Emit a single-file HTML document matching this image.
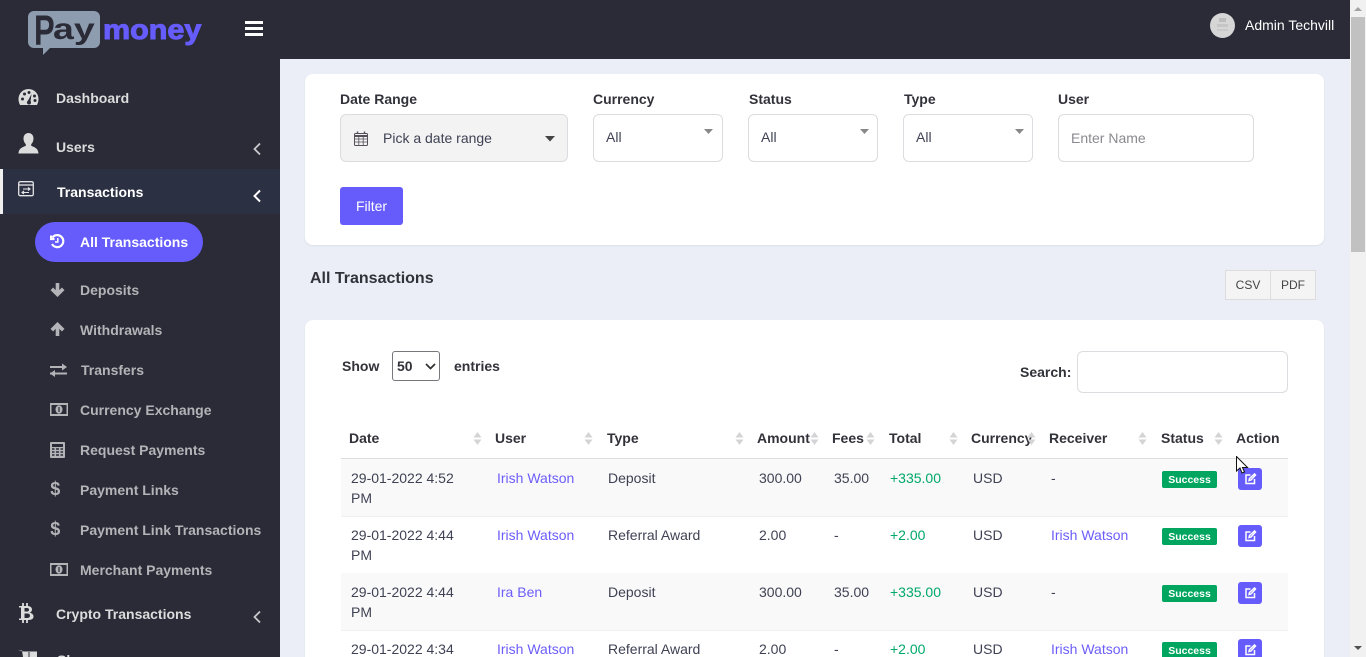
<!DOCTYPE html>
<html><head><meta charset="utf-8"><style>
html,body{margin:0;padding:0;width:1366px;height:657px;overflow:hidden;background:#ebeef6;font-family:"Liberation Sans",sans-serif;font-size:14px;color:#3f4254}
#wrap{position:absolute;left:0;top:0;width:1366px;height:657px;overflow:hidden;background:#ebeef6}
.t{position:absolute;white-space:nowrap;line-height:20px}
.b{font-weight:700}
svg{position:absolute;display:block}
#side{position:absolute;left:0;top:0;width:280px;height:657px;background:#2a2b36;overflow:hidden}
#top{position:absolute;left:280px;top:0;width:1070px;height:59px;background:#2a2b36}
.card{position:absolute;background:#fff;border-radius:8px;box-shadow:0 1px 2px rgba(0,0,0,.06)}
.m{color:#dcdcdc;font-weight:700}
.s{color:#b4b4b8;font-weight:700}
.box{position:absolute;box-sizing:border-box;border:1px solid #dcdce0;border-radius:6px;background:#fff}
.h{font-weight:700;color:#32323a}
.a{color:#6c5efa}
.g{color:#00a86b}
.badge{position:absolute;left:1162px;width:55px;height:17px;background:#00a65f;border-radius:2px;color:#fff;font-weight:700;font-size:10.5px;line-height:18px;text-align:center}
.btn{position:absolute;left:1238px;width:24px;height:22px;background:#665cfc;border-radius:3px}
.row{position:absolute;left:341px;width:947px}
.d{font-size:19px;font-weight:700;line-height:20px;transform:scaleX(.95)}
</style></head><body><div id="wrap">
<div id="side">
<svg style="left:27px;top:10px" width="75" height="46" viewBox="0 0 75 46"><path d="M7 1H67a6 6 0 0 1 6 6V32a6 6 0 0 1-6 6H23L16 45V38H7a6 6 0 0 1-6-6V7a6 6 0 0 1 6-6Z" fill="#8e9cb0"/></svg>
<div style="position:absolute;left:34px;top:9px;font:700 43px/44px 'Liberation Sans',sans-serif;color:#2a2b36;transform:scaleX(.72);transform-origin:left">P</div>
<div style="position:absolute;left:53px;top:13px;font:700 30px/34px 'Liberation Sans',sans-serif;color:#2a2b36;transform:scaleX(1.25);transform-origin:left">ay</div>
<div style="position:absolute;left:103px;top:13px;font:700 28px/34px 'Liberation Sans',sans-serif;color:#665cfc;-webkit-text-stroke:1px #665cfc;transform:scaleX(1.09);transform-origin:left">money</div>
<svg style="left:245px;top:21px" width="18" height="16"><path d="M0 1.500H18M0 7.500H18M0 13.500H18" stroke="#fff" stroke-width="3"/></svg>

<svg style="left:18px;top:88px" width="21" height="18" viewBox="0 0 21 18"><path d="M10.500 1A10 10 0 0 0 .5 11c0 2 .5 4 1.500 6h17c1-2 1.500-4 1.500-6a10 10 0 0 0-10-10Z" fill="#dcdcdc"/><g fill="#2a2b36"><circle cx="4.500" cy="11" r="1.500"/><circle cx="6.500" cy="6" r="1.500"/><circle cx="11" cy="4.500" r="1.500"/><circle cx="16.500" cy="8" r="1.500"/><circle cx="17" cy="12.500" r="1.500"/><path d="M13.500 6 12.500 13.500 9.500 13.500Z"/><circle cx="11" cy="14.500" r="2"/></g></svg>
<div class="t m" style="left:56px;top:88px">Dashboard</div>

<svg style="left:18px;top:133px" width="21" height="21" viewBox="0 0 21 21"><path d="M10.500 0c3.200 0 5 2.500 5 5.500 0 2.500-1 4.500-2.300 5.700v1.500c2.500 1.300 7 2 7.300 7.800H.5c.3-5.800 4.800-6.500 7.300-7.800v-1.500C6.500 10 5.500 8 5.500 5.500c0-3 1.800-5.500 5-5.500Z" fill="#dcdcdc"/></svg>
<div class="t m" style="left:56px;top:137px">Users</div>
<svg style="left:252px;top:142px" width="10" height="14"><path d="M8 1.500 2.500 7 8 12.500" fill="none" stroke="#c9c9cc" stroke-width="1.800"/></svg>

<div style="position:absolute;left:0;top:169px;width:280px;height:45px;background:#2b3043"></div>
<div style="position:absolute;left:0;top:169px;width:3px;height:45px;background:#f0f0f0"></div>
<svg style="left:18px;top:181px" width="17" height="16" viewBox="0 0 17 16"><rect x=".7" y=".7" width="14.600" height="14" rx="1.500" fill="none" stroke="#e4e4e4" stroke-width="1.300"/><path d="M1 4H15" stroke="#e4e4e4" stroke-width="1.300"/><path d="M5 8H12M10 6.500 12 8 10 9.500M11 11.500H4M6 10 4 11.500 6 13" fill="none" stroke="#e4e4e4" stroke-width="1.100"/></svg>
<div class="t b" style="left:57px;top:182px;color:#fff">Transactions</div>
<svg style="left:252px;top:189px" width="10" height="14"><path d="M8 1.500 2.500 7 8 12.500" fill="none" stroke="#fff" stroke-width="2"/></svg>

<div style="position:absolute;left:35px;top:222px;width:168px;height:40px;border-radius:20px;background:#665cfc"></div>
<svg style="left:50px;top:234px" width="15" height="15" viewBox="0 0 15 15"><path d="M2.500 3.500A6 6 0 1 1 2 10M1 1.500V5H4.500" fill="none" stroke="#fff" stroke-width="2.200"/><path d="M7.800 4V8H5" fill="none" stroke="#fff" stroke-width="1.500"/></svg>
<div class="t b" style="left:80px;top:232px;color:#fff">All Transactions</div>

<svg style="left:50px;top:282px" width="15" height="15" viewBox="0 0 15 15"><path d="M7.500 1V12M1.800 6.800 7.500 12.500 13.200 6.800" fill="none" stroke="#b4b4b8" stroke-width="3.600"/></svg>
<div class="t s" style="left:80px;top:280px">Deposits</div>
<svg style="left:50px;top:322px" width="15" height="15" viewBox="0 0 15 15"><path d="M7.500 14V3M1.800 8.200 7.500 2.500 13.200 8.200" fill="none" stroke="#b4b4b8" stroke-width="3.600"/></svg>
<div class="t s" style="left:80px;top:320px">Withdrawals</div>
<svg style="left:50px;top:363px" width="17" height="14" viewBox="0 0 17 14"><path d="M0 4H13M0 10.500H17" stroke="#b4b4b8" stroke-width="2"/><path d="M12 .5 17 4 12 7.500ZM5 7 0 10.500 5 14Z" fill="#b4b4b8"/></svg>
<div class="t s" style="left:81px;top:360px">Transfers</div>
<svg style="left:50px;top:403px" width="18" height="13" viewBox="0 0 18 13"><rect width="18" height="13" fill="#b4b4b8"/><rect x="1.500" y="2" width="15" height="9" fill="#2a2b36"/><ellipse cx="9" cy="6.500" rx="3.500" ry="4.200" fill="#b4b4b8"/><path d="M9 4V9" stroke="#2a2b36" stroke-width="1.200"/></svg>
<div class="t s" style="left:80px;top:400px">Currency Exchange</div>
<svg style="left:50px;top:442px" width="15" height="16" viewBox="0 0 15 16"><rect width="15" height="16" rx="1" fill="#b4b4b8"/><path d="M2 2H13V5H2Z" fill="#2a2b36"/><path d="M2 7H4.500M6 7H9M10.500 7H13M2 10H4.500M6 10H9M10.500 10H13M2 13H4.500M6 13H9M10.500 13H13" stroke="#2a2b36" stroke-width="1.500"/></svg>
<div class="t s" style="left:80px;top:440px">Request Payments</div>
<div class="t s d" style="left:50px;top:480px">$</div>
<div class="t s" style="left:80px;top:480px">Payment Links</div>
<div class="t s d" style="left:50px;top:520px">$</div>
<div class="t s" style="left:80px;top:520px">Payment Link Transactions</div>
<svg style="left:50px;top:563px" width="18" height="13" viewBox="0 0 18 13"><rect width="18" height="13" fill="#b4b4b8"/><rect x="1.500" y="2" width="15" height="9" fill="#2a2b36"/><ellipse cx="9" cy="6.500" rx="3.500" ry="4.200" fill="#b4b4b8"/><path d="M9 4V9" stroke="#2a2b36" stroke-width="1.200"/></svg>
<div class="t s" style="left:80px;top:560px">Merchant Payments</div>

<svg style="left:18px;top:603px" width="16" height="20" viewBox="0 0 16 20"><path d="M5 0V3M9 0V3M5 17V20M9 0V3M9 17V20" stroke="#dcdcdc" stroke-width="1.800"/><path d="M1 3H9.500C13 3 14 5 14 6.500S13 9.300 11.500 9.700C14 10 15.500 11.500 15.500 13.500 15.500 15.500 14 17 10.500 17H1V15.500H3V4.500H1Z" fill="#dcdcdc"/><path d="M6.500 5V8.500H9C10.500 8.500 11 7.800 11 6.800S10.500 5 9 5ZM6.500 10.500V15H9.500C11.200 15 12 14 12 12.800S11.200 10.500 9.500 10.500Z" fill="#2a2b36"/></svg>
<div class="t m" style="left:56px;top:604px">Crypto Transactions</div>
<svg style="left:252px;top:610px" width="10" height="14"><path d="M8 1.500 2.500 7 8 12.500" fill="none" stroke="#c9c9cc" stroke-width="1.800"/></svg>
<svg style="left:18px;top:650px" width="20" height="8"><path d="M0 .5H4L5 7H19V1.500H6" fill="#dcdcdc"/><path d="M11 2V7" stroke="#2a2b36"/></svg>
<div class="t m" style="left:57px;top:650px">Shop</div>
</div>

<div id="top"></div>
<svg style="left:1210px;top:13px" width="25" height="25"><circle cx="12.500" cy="12.500" r="12.500" fill="#d6d6d6"/><rect x="9" y="5" width="7" height="4" fill="#bdbdbd"/><rect x="7" y="11" width="11" height="3" fill="#c6c6c6"/><rect x="7" y="16" width="11" height="2" fill="#cacaca"/></svg>
<div class="t" style="left:1245px;top:15px;color:#fff">Admin Techvill</div>

<div style="position:absolute;left:1350px;top:0;width:16px;height:657px;background:#f1f1f1"></div>
<div style="position:absolute;left:1351px;top:17px;width:14px;height:235px;background:#c1c1c1"></div>
<svg style="left:1354px;top:6px" width="9" height="6"><path d="M0 5H8L4 1Z" fill="#a3a3a3"/></svg>
<svg style="left:1354px;top:645px" width="9" height="6"><path d="M0 1H8L4 5Z" fill="#505050"/></svg>

<div class="card" style="left:305px;top:74px;width:1019px;height:171px"></div>
<div class="t h" style="left:340px;top:89px">Date Range</div>
<div class="t h" style="left:593px;top:89px">Currency</div>
<div class="t h" style="left:749px;top:89px">Status</div>
<div class="t h" style="left:904px;top:89px">Type</div>
<div class="t h" style="left:1058px;top:89px">User</div>

<div class="box" style="left:340px;top:114px;width:228px;height:48px;background:#f3f3f3"></div>
<svg style="left:354px;top:131px" width="14" height="15" viewBox="0 0 14 15"><rect x=".5" y="2.500" width="13" height="12" rx="1" fill="none" stroke="#55505a"/><path d="M1 5H13" stroke="#55505a" stroke-width="2"/><path d="M4.800 5V14M9.200 5V14M1 8H13M1 11H13" stroke="#55505a" stroke-width=".8"/><path d="M3.500 .5V3M10.500 .5V3" stroke="#55505a" stroke-width="1.500"/></svg>
<div class="t" style="left:383px;top:128px">Pick a date range</div>
<svg style="left:545px;top:136px" width="10" height="6"><path d="M0 0H10L5 5.500Z" fill="#444"/></svg>

<div class="box" style="left:593px;top:114px;width:130px;height:48px"></div>
<div class="t" style="left:606px;top:127px">All</div>
<svg style="left:704px;top:129px" width="10" height="6"><path d="M0 0H9L4.500 5Z" fill="#888"/></svg>
<div class="box" style="left:748px;top:114px;width:130px;height:48px"></div>
<div class="t" style="left:761px;top:127px">All</div>
<svg style="left:860px;top:129px" width="10" height="6"><path d="M0 0H9L4.500 5Z" fill="#888"/></svg>
<div class="box" style="left:903px;top:114px;width:130px;height:48px"></div>
<div class="t" style="left:916px;top:127px">All</div>
<svg style="left:1015px;top:129px" width="10" height="6"><path d="M0 0H9L4.500 5Z" fill="#888"/></svg>
<div class="box" style="left:1058px;top:114px;width:196px;height:48px"></div>
<div class="t" style="left:1071px;top:128px;color:#8a8a90">Enter Name</div>

<div style="position:absolute;left:340px;top:187px;width:63px;height:38px;background:#665cfc;border-radius:3px;color:#fff;text-align:center;line-height:38px">Filter</div>

<div class="t b" style="left:310px;top:268px;font-size:16px;line-height:21px;color:#32323a">All Transactions</div>
<div style="position:absolute;left:1225px;top:270px;width:46px;height:30px;box-sizing:border-box;border:1px solid #dcdcdc;background:#f4f4f4;font-size:12px;line-height:28px;text-align:center;color:#444">CSV</div>
<div style="position:absolute;left:1270px;top:270px;width:46px;height:30px;box-sizing:border-box;border:1px solid #dcdcdc;background:#f4f4f4;font-size:12px;line-height:28px;text-align:center;color:#444">PDF</div>

<div class="card" style="left:305px;top:320px;width:1019px;height:360px"></div>
<div class="t h" style="left:342px;top:356px">Show</div>
<div style="position:absolute;left:392px;top:351px;width:48px;height:30px;box-sizing:border-box;border:1px solid #77777c;border-radius:3px;background:#fff;color:#32323a;font-weight:700;line-height:28px;padding-left:4px">50</div>
<svg style="left:425px;top:363px" width="11" height="7"><path d="M1 1 5.500 5.500 10 1" fill="none" stroke="#333" stroke-width="1.800"/></svg>
<div class="t h" style="left:454px;top:356px">entries</div>
<div class="t h" style="left:1020px;top:362px">Search:</div>
<div class="box" style="left:1077px;top:351px;width:211px;height:42px"></div>

<div class="t h" style="left:349px;top:428px">Date</div>
<div class="t h" style="left:495px;top:428px">User</div>
<div class="t h" style="left:607px;top:428px">Type</div>
<div class="t h" style="left:757px;top:428px">Amount</div>
<div class="t h" style="left:832px;top:428px">Fees</div>
<div class="t h" style="left:889px;top:428px">Total</div>
<div class="t h" style="left:971px;top:428px">Currency</div>
<div class="t h" style="left:1049px;top:428px">Receiver</div>
<div class="t h" style="left:1161px;top:428px">Status</div>
<div class="t h" style="left:1236px;top:428px">Action</div>
<svg style="left:0;top:431px" width="1366" height="15" fill="#d4d4d6"><path d="M473.500 6.500 477.500 1 481.500 6.500ZM473.500 8.500 477.500 14 481.500 8.500Z"/><path d="M584.500 6.500 588.500 1 592.500 6.500ZM584.500 8.500 588.500 14 592.500 8.500Z"/><path d="M735.500 6.500 739.500 1 743.500 6.500ZM735.500 8.500 739.500 14 743.500 8.500Z"/><path d="M810.500 6.500 814.500 1 818.500 6.500ZM810.500 8.500 814.500 14 818.500 8.500Z"/><path d="M866.500 6.500 870.500 1 874.500 6.500ZM866.500 8.500 870.500 14 874.500 8.500Z"/><path d="M949.500 6.500 953.500 1 957.500 6.500ZM949.500 8.500 953.500 14 957.500 8.500Z"/><path d="M1027.500 6.500 1031.500 1 1035.500 6.500ZM1027.500 8.500 1031.500 14 1035.500 8.500Z"/><path d="M1138.500 6.500 1142.500 1 1146.500 6.500ZM1138.500 8.500 1142.500 14 1146.500 8.500Z"/><path d="M1214.500 6.500 1218.500 1 1222.500 6.500ZM1214.500 8.500 1218.500 14 1222.500 8.500Z"/></svg>
<div style="position:absolute;left:341px;top:458px;width:947px;height:1px;background:#dedee0"></div>

<div class="row" style="top:459px;height:57px;background:#f9f9f9;border-bottom:1px solid #f0f0f0"></div>
<div class="row" style="top:573px;height:57px;background:#f9f9f9;border-bottom:1px solid #f0f0f0"></div>

<div class="t" style="left:351px;top:468px">29-01-2022 4:52</div><div class="t" style="left:351px;top:488px">PM</div>
<div class="t a" style="left:497px;top:468px">Irish Watson</div><div class="t" style="left:608px;top:468px">Deposit</div><div class="t" style="left:759px;top:468px">300.00</div><div class="t" style="left:834px;top:468px">35.00</div><div class="t g" style="left:890px;top:468px">+335.00</div><div class="t" style="left:973px;top:468px">USD</div><div class="t" style="left:1051px;top:468px">-</div>

<div class="t" style="left:351px;top:525px">29-01-2022 4:44</div><div class="t" style="left:351px;top:545px">PM</div>
<div class="t a" style="left:497px;top:525px">Irish Watson</div><div class="t" style="left:608px;top:525px">Referral Award</div><div class="t" style="left:759px;top:525px">2.00</div><div class="t" style="left:834px;top:525px">-</div><div class="t g" style="left:890px;top:525px">+2.00</div><div class="t" style="left:973px;top:525px">USD</div><div class="t a" style="left:1051px;top:525px">Irish Watson</div>

<div class="t" style="left:351px;top:582px">29-01-2022 4:44</div><div class="t" style="left:351px;top:602px">PM</div>
<div class="t a" style="left:497px;top:582px">Ira Ben</div><div class="t" style="left:608px;top:582px">Deposit</div><div class="t" style="left:759px;top:582px">300.00</div><div class="t" style="left:834px;top:582px">35.00</div><div class="t g" style="left:890px;top:582px">+335.00</div><div class="t" style="left:973px;top:582px">USD</div><div class="t" style="left:1051px;top:582px">-</div>

<div class="t" style="left:351px;top:639px">29-01-2022 4:34</div>
<div class="t a" style="left:497px;top:639px">Irish Watson</div><div class="t" style="left:608px;top:639px">Referral Award</div><div class="t" style="left:759px;top:639px">2.00</div><div class="t" style="left:834px;top:639px">-</div><div class="t g" style="left:890px;top:639px">+2.00</div><div class="t" style="left:973px;top:639px">USD</div><div class="t a" style="left:1051px;top:639px">Irish Watson</div>

<div class="badge" style="top:471px">Success</div>
<div class="badge" style="top:528px">Success</div>
<div class="badge" style="top:585px">Success</div>
<div class="badge" style="top:642px">Success</div>

<div class="btn" style="top:468px"></div>
<div class="btn" style="top:525px"></div>
<div class="btn" style="top:582px"></div>
<div class="btn" style="top:639px"></div>
<svg style="left:1244px;top:473px" width="13" height="12" viewBox="0 0 12 12"><path d="M6 2H1.500V10.500H10V6M4.500 7.500 5 5.500 10 1 11 2 6.500 7Z" fill="none" stroke="#fff" stroke-width="1.500"/></svg>
<svg style="left:1244px;top:530px" width="13" height="12" viewBox="0 0 12 12"><path d="M6 2H1.500V10.500H10V6M4.500 7.500 5 5.500 10 1 11 2 6.500 7Z" fill="none" stroke="#fff" stroke-width="1.500"/></svg>
<svg style="left:1244px;top:587px" width="13" height="12" viewBox="0 0 12 12"><path d="M6 2H1.500V10.500H10V6M4.500 7.500 5 5.500 10 1 11 2 6.500 7Z" fill="none" stroke="#fff" stroke-width="1.500"/></svg>
<svg style="left:1244px;top:644px" width="13" height="12" viewBox="0 0 12 12"><path d="M6 2H1.500V10.500H10V6M4.500 7.500 5 5.500 10 1 11 2 6.500 7Z" fill="none" stroke="#fff" stroke-width="1.500"/></svg>
<svg style="left:1236px;top:456px" width="14" height="20" viewBox="0 0 14 20"><path d="M.5.500V15L4 12 6 17 8.500 16 6.500 11.500H11.500Z" fill="#fff" stroke="#111" stroke-width="1"/></svg>
</div></body></html>
